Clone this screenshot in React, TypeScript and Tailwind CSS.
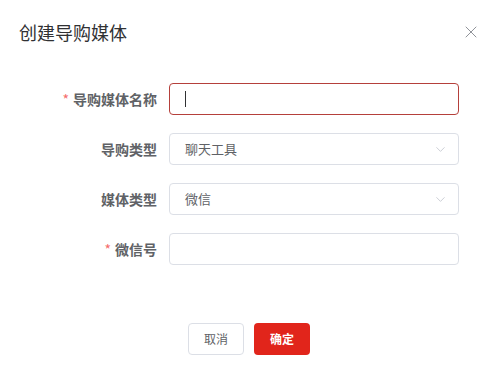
import { X, ChevronDown } from "lucide-react";

const font = { fontFamily: '"Noto Sans CJK SC", "Noto Sans", sans-serif' };

function Label({ text, required }: { text: string; required?: boolean }) {
  return (
    <label className="w-[169px] pr-[12px] text-right text-[14px] font-bold text-[#606266] leading-[32px] shrink-0">
      {required && <span className="text-[#f56c6c] mr-[4px] font-normal">*</span>}
      {text}
    </label>
  );
}

function Select({ value }: { value: string }) {
  return (
    <div className="w-[290px] h-[32px] border border-[#dcdfe6] rounded-[4px] flex items-center justify-between pl-[15px] pr-[10px] text-[13px] text-[#606266]">
      <span>{value}</span>
      <ChevronDown className="w-[15px] h-[15px] text-[#c0c4cc]" strokeWidth={1.3} />
    </div>
  );
}

export default function App() {
  return (
    <div className="w-[498px] h-[374px] bg-white flex flex-col" style={font}>
      <div className="flex items-center justify-between pl-[19px] pr-[17px] pt-[20px] h-[44px]">
        <span className="text-[18px] text-[#303133]">创建导购媒体</span>
        <X className="w-[20px] h-[20px] text-[#909399]" strokeWidth={1.2} />
      </div>

      <form className="flex flex-col gap-[18px] pt-[39px]">
        <div className="flex">
          <Label text="导购媒体名称" required />
          <div className="w-[290px] h-[32px] border border-[#b5403b] rounded-[4px] flex items-center pl-[15px]">
            <span className="w-px h-[16px] bg-[#303133]" />
          </div>
        </div>
        <div className="flex">
          <Label text="导购类型" />
          <Select value="聊天工具" />
        </div>
        <div className="flex">
          <Label text="媒体类型" />
          <Select value="微信" />
        </div>
        <div className="flex">
          <Label text="微信号" required />
          <div className="w-[290px] h-[32px] border border-[#dcdfe6] rounded-[4px]" />
        </div>
      </form>

      <div className="flex justify-center gap-[10px] mt-[58px]">
        <button className="w-[56px] h-[32px] border border-[#dcdfe6] rounded-[4px] text-[12px] text-[#606266] bg-white">
          取消
        </button>
        <button className="w-[56px] h-[32px] rounded-[4px] text-[12px] font-bold text-white bg-[#e1251b]">
          确定
        </button>
      </div>
    </div>
  );
}
